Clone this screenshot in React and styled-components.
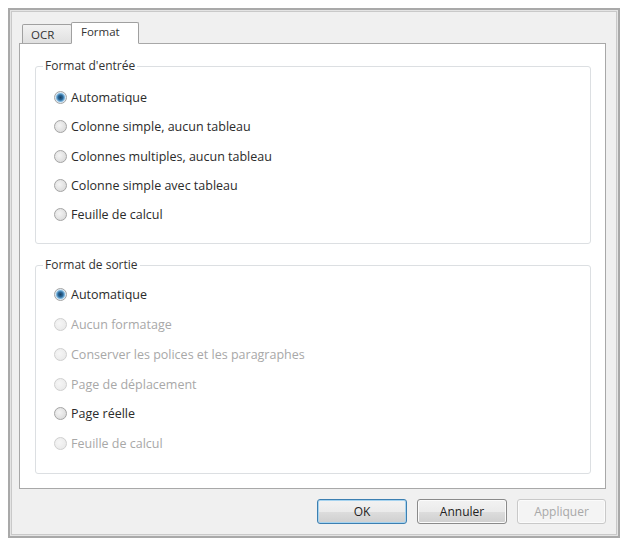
import React from "react";
import styled, { createGlobalStyle } from "styled-components";

const GlobalStyle = createGlobalStyle`
  html, body {
    margin: 0;
    padding: 0;
    background: #ffffff;
  }
  body {
    font-family: "Open Sans", "DejaVu Sans", sans-serif;
    font-size: 12.5px;
    color: #2b2b2b;
  }
`;

const Window = styled.div`
  box-sizing: border-box;
  margin: 8px 0 0 8px;
  width: 612px;
  height: 530px;
  border: 2px solid #a9a9a9;
  box-shadow: inset 0 0 0 1px #e4e4e4, inset 0 0 0 2px #c9c9c9;
  background: #f0f0f0;
  padding: 11px 12px 0 9px;
  display: flex;
  flex-direction: column;
`;

const TabStrip = styled.div`
  display: flex;
  align-items: flex-end;
  height: 22px;
  padding-left: 3px;
  position: relative;
  z-index: 1;
`;

const Tab = styled.div`
  box-sizing: border-box;
  width: ${p => p.$w};
  height: ${p => (p.$active ? "22px" : "19px")};
  padding-left: ${p => (p.$active ? "9px" : "8px")};
  display: flex;
  align-items: center;
  font-size: 11.5px;
  border: 1px solid #a0a0a0;
  border-bottom: ${p => (p.$active ? "1px solid #ffffff" : "none")};
  border-radius: 2px 2px 0 0;
  margin-bottom: ${p => (p.$active ? "-1px" : "0")};
  margin-left: ${p => (p.$active ? "-1px" : "0")};
  background: ${p =>
    p.$active ? "#ffffff" : "linear-gradient(#f2f2f2, #e0e0e0)"};
  color: #333;
  padding-bottom: ${p => (p.$active ? "3px" : "0")};
`;

const Panel = styled.div`
  box-sizing: border-box;
  height: 446px;
  background: #ffffff;
  border: 1px solid #a8a8a8;
  padding: 14px 14px 14px 15px;
  display: flex;
  flex-direction: column;
  gap: 13px;
`;

const Group = styled.fieldset`
  margin: 0;
  border: 1px solid #dcdfe2;
  border-radius: 3px;
  padding: ${p => p.$pad};
  height: ${p => p.$h};
  box-sizing: border-box;
`;

const Legend = styled.legend`
  padding: 0 2px;
  margin-left: -11px;
  font-size: 12px;
  line-height: 16px;
  color: #333;
`;

const Row = styled.label`
  display: flex;
  align-items: center;
  height: ${p => p.$h};
  gap: 4px;
  color: ${p => (p.$disabled ? "#a8a8a8" : "#2b2b2b")};
`;

const Radio = styled.span`
  box-sizing: border-box;
  width: 13px;
  height: 13px;
  border-radius: 50%;
  border: 1px solid ${p => (p.$disabled ? "#cfcfcf" : "#a4a4a4")};
  background: ${p =>
    p.$checked
      ? "radial-gradient(circle at 50% 50%, #1d3f5e 0, #2c6a9c 2.5px, #78b3dc 4px, #dbe8f2 5px)"
      : p.$disabled
      ? "radial-gradient(circle at 40% 40%, #f6f6f6, #e6e6e6)"
      : "radial-gradient(circle at 40% 40%, #f4f4f4, #d4d4d4)"};
  flex: none;
`;

const Footer = styled.div`
  display: flex;
  justify-content: flex-end;
  gap: 10px;
  padding-top: 10px;
`;

const Button = styled.button`
  box-sizing: border-box;
  width: ${p => p.$w};
  height: 25px;
  font-family: inherit;
  font-size: 12px;
  border-radius: 3px;
  border: 1px solid
    ${p => (p.$default ? "#3c7fb1" : p.$disabled ? "#c9c9c9" : "#8a8a8a")};
  box-shadow: ${p =>
    p.$default ? "inset 0 0 0 1px #a6d3ef" : "inset 0 0 0 1px #fbfbfb"};
  background: ${p =>
    p.$disabled
      ? "#f4f4f4"
      : "linear-gradient(#f2f2f2 0%, #ebebeb 50%, #dddddd 51%, #cfcfcf 100%)"};
  color: ${p => (p.$disabled ? "#a8a8a8" : "#222")};
  padding: 0;
`;

const inputRows = [
  { label: "Automatique", checked: true },
  { label: "Colonne simple, aucun tableau" },
  { label: "Colonnes multiples, aucun tableau" },
  { label: "Colonne simple avec tableau" },
  { label: "Feuille de calcul" },
];

const outputRows = [
  { label: "Automatique", checked: true },
  { label: "Aucun formatage", disabled: true },
  { label: "Conserver les polices et les paragraphes", disabled: true },
  { label: "Page de déplacement", disabled: true },
  { label: "Page réelle" },
  { label: "Feuille de calcul", disabled: true },
];

function Options({ rows, rowH }) {
  return rows.map(r => (
    <Row key={r.label} $h={rowH} $disabled={r.disabled}>
      <Radio $checked={r.checked} $disabled={r.disabled} />
      {r.label}
    </Row>
  ));
}

export default function App() {
  return (
    <>
      <GlobalStyle />
      <Window>
        <TabStrip>
          <Tab $w="50px">OCR</Tab>
          <Tab $w="68px" $active>Format</Tab>
        </TabStrip>
        <Panel>
          <Group $pad="9px 10px 12px 18px" $h="187px">
            <Legend>Format d'entrée</Legend>
            <Options rows={inputRows} rowH="29.3px" />
          </Group>
          <Group $pad="7px 10px 9px 18px" $h="218px">
            <Legend>Format de sortie</Legend>
            <Options rows={outputRows} rowH="29.7px" />
          </Group>
        </Panel>
        <Footer>
          <Button $w="90px" $default>OK</Button>
          <Button $w="90px">Annuler</Button>
          <Button $w="89px" $disabled>Appliquer</Button>
        </Footer>
      </Window>
    </>
  );
}
